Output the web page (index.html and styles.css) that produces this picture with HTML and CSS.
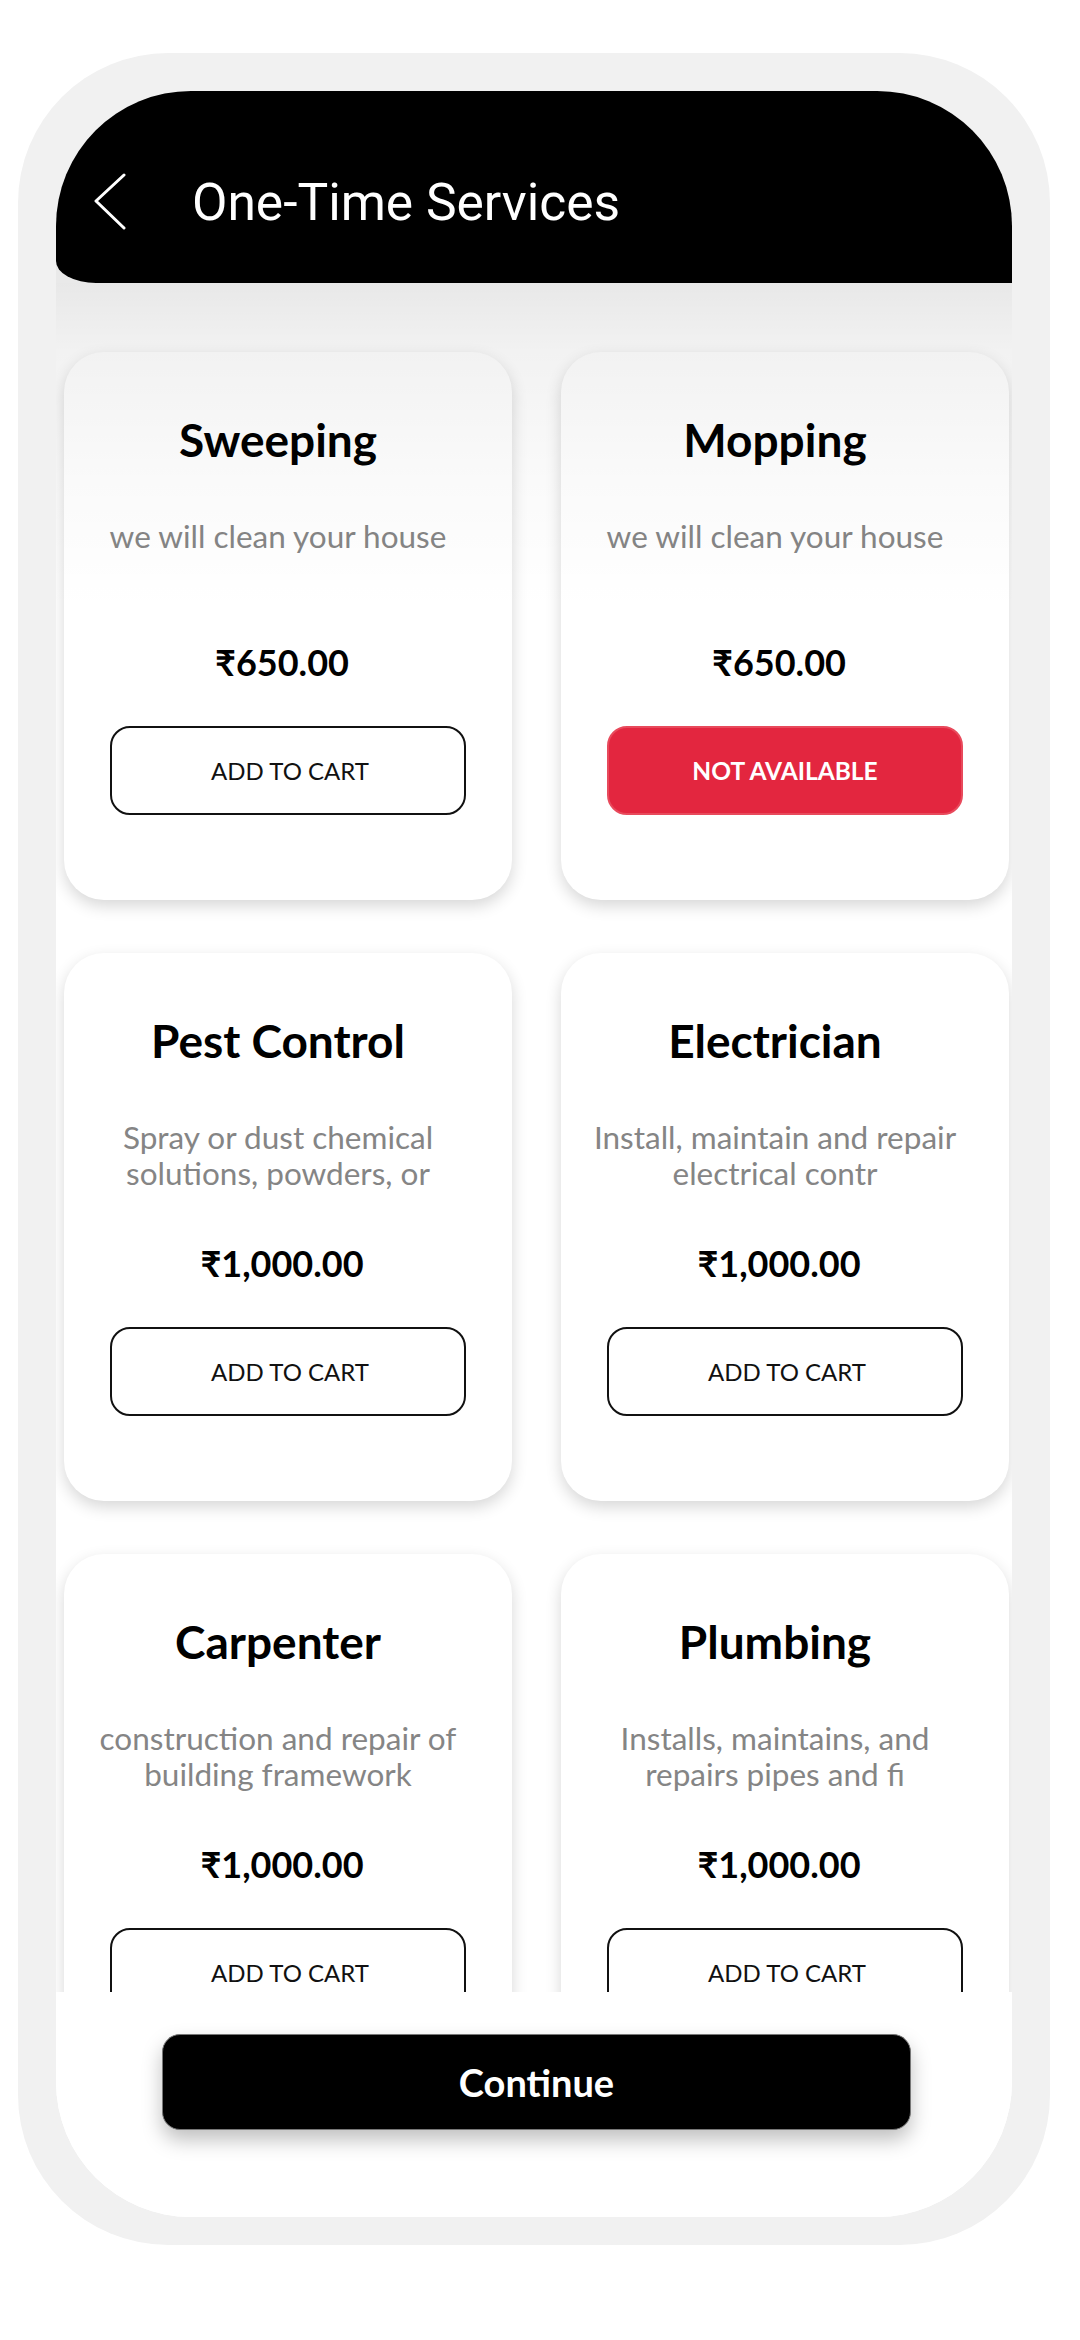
FILE: index.html
```html
<!DOCTYPE html>
<html lang="en">
<head>
<meta charset="utf-8">
<title>One-Time Services</title>
<link rel="stylesheet" href="styles.css">
</head>
<body>
<div class="phone">
  <div class="screen">
    <div class="header-wrap">
      <header class="header">
        <svg class="back" width="34" height="60" viewBox="0 0 34 60" aria-hidden="true">
          <polyline points="30,3 2,29 30,56" fill="none" stroke="#fff" stroke-width="3" stroke-linecap="round" stroke-linejoin="round"/>
        </svg>
        <h1 class="title">One-Time Services</h1>
      </header>
    </div>
    <main class="content">
      <div class="grid">
        <div class="card">
          <h2 class="card-title">Sweeping</h2>
          <p class="card-desc">we will clean your house</p>
          <p class="card-price">₹650.00</p>
          <button class="btn btn-add">ADD TO CART</button>
        </div>
        <div class="card">
          <h2 class="card-title">Mopping</h2>
          <p class="card-desc">we will clean your house</p>
          <p class="card-price">₹650.00</p>
          <button class="btn btn-na">NOT AVAILABLE</button>
        </div>
        <div class="card">
          <h2 class="card-title">Pest Control</h2>
          <p class="card-desc">Spray or dust chemical<br>solutions, powders, or</p>
          <p class="card-price">₹1,000.00</p>
          <button class="btn btn-add">ADD TO CART</button>
        </div>
        <div class="card">
          <h2 class="card-title">Electrician</h2>
          <p class="card-desc">Install, maintain and repair<br>electrical contr</p>
          <p class="card-price">₹1,000.00</p>
          <button class="btn btn-add">ADD TO CART</button>
        </div>
        <div class="card">
          <h2 class="card-title">Carpenter</h2>
          <p class="card-desc">construction and repair of<br>building framework</p>
          <p class="card-price">₹1,000.00</p>
          <button class="btn btn-add">ADD TO CART</button>
        </div>
        <div class="card">
          <h2 class="card-title">Plumbing</h2>
          <p class="card-desc">Installs, maintains, and<br>repairs pipes and fi</p>
          <p class="card-price">₹1,000.00</p>
          <button class="btn btn-add">ADD TO CART</button>
        </div>
      </div>
      <div class="shade"></div>
    </main>
    <footer class="footer">
      <button class="continue">Continue</button>
    </footer>
  </div>
</div>
</body>
</html>
```
FILE: styles.css
```css
* { box-sizing: border-box; }

html, body {
  margin: 0;
  padding: 0;
  background: #ffffff;
}

body {
  font-family: "Lato", "Noto Sans", "DejaVu Sans", sans-serif;
  color: #000;
}

.phone {
  margin: 53px 0 0 18px;
  width: 1032px;
  height: 2192px;
  background: #f1f1f1;
  border-radius: 150px;
  padding: 38px 38px 28px 38px;
}

.screen {
  height: 100%;
  background: #ffffff;
  border-radius: 135px;
  overflow: hidden;
  display: flex;
  flex-direction: column;
}

.header-wrap {
  flex: none;
  background: #e9e9e9;
}

.header {
  height: 192px;
  background: #000;
  border-bottom-left-radius: 40px 22px;
  display: flex;
  align-items: center;
  padding: 30px 0 0 38px;
}

.back {
  display: block;
  flex: none;
}

.title {
  margin: 0 0 0 64px;
  font-family: "Roboto", "Noto Sans", sans-serif;
  font-weight: 400;
  font-size: 51.5px;
  color: #fff;
  letter-spacing: 0;
}

.content {
  flex: 1;
  position: relative;
  overflow: hidden;
  background: #ffffff;
  padding: 69px 4px 0 8px;
}

.grid {
  display: grid;
  grid-template-columns: 448px 448px;
  column-gap: 49px;
  row-gap: 53px;
}

.card {
  height: 548px;
  background: #ffffff;
  border-radius: 40px;
  box-shadow: 0 6px 16px rgba(0, 0, 0, 0.16);
  padding: 60px 0 0 0;
  display: flex;
  flex-direction: column;
  align-items: center;
}

.card-title {
  margin: 0;
  padding-right: 20px;
  font-size: 46px;
  line-height: 1.2;
  font-weight: 700;
  white-space: nowrap;
}

.card-desc {
  margin: 51px 0 0 0;
  padding-right: 20px;
  height: 72px;
  font-size: 31.5px;
  line-height: 36px;
  color: #858585;
  text-align: center;
  white-space: nowrap;
}

.card-price {
  margin: 51px 0 0 0;
  padding-right: 12px;
  font-size: 36px;
  line-height: 1.2;
  font-weight: 700;
}

.btn {
  margin-top: 42px;
  width: 356px;
  height: 89px;
  border-radius: 20px;
  font-family: inherit;
  font-size: 24px;
  cursor: pointer;
}

.btn-add {
  background: #fff;
  border: 2px solid #111;
  color: #111;
  font-weight: 400;
  padding: 0 0 0 4px;
}

.btn-na {
  background: #e3263f;
  border: 2px solid #e84a5c;
  color: #fff;
  font-weight: 700;
  font-size: 24.5px;
}

.shade {
  position: absolute;
  left: 0;
  right: 0;
  top: 0;
  height: 330px;
  pointer-events: none;
  background: linear-gradient(to bottom,
    rgba(0, 0, 0, 0.09) 0,
    rgba(0, 0, 0, 0.05) 70px,
    rgba(0, 0, 0, 0.02) 200px,
    rgba(0, 0, 0, 0) 330px);
}

.footer {
  flex: none;
  height: 225px;
  background: #ffffff;
  padding: 42px 0 0 106px;
  position: relative;
}

.continue {
  display: block;
  width: 749px;
  height: 96px;
  background: #000;
  color: #fff;
  border: 1px solid #777;
  border-radius: 18px;
  font-family: inherit;
  font-weight: 700;
  font-size: 38px;
  box-shadow: 0 10px 20px rgba(0, 0, 0, 0.25);
  cursor: pointer;
}
```
